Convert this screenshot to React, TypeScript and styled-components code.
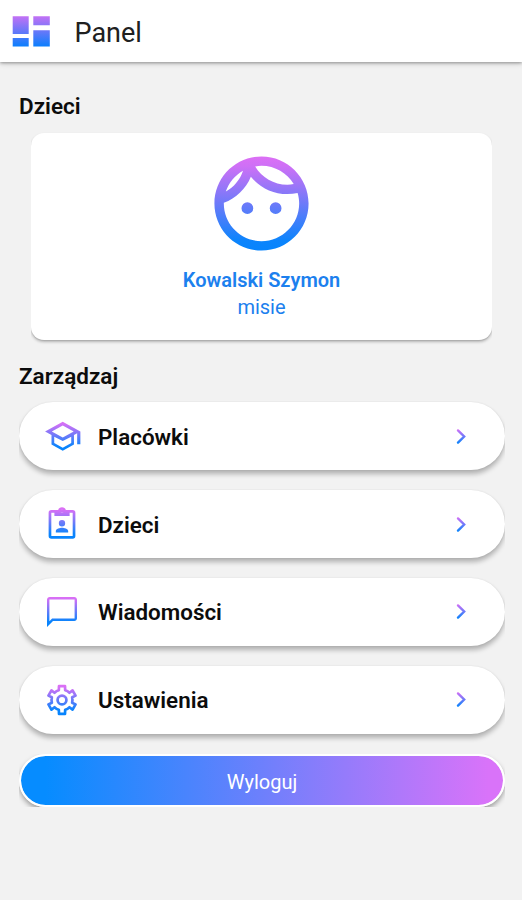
import React from "react";
import styled, { createGlobalStyle } from "styled-components";

const GlobalStyle = createGlobalStyle`
  *, *::before, *::after { box-sizing: border-box; }
  body { margin: 0; background: #f2f2f2; font-family: Roboto, sans-serif; color: #0c0c0c; }
`;

const Screen = styled.div`
  width: 100%;
  max-width: 522px;
  min-height: 900px;
  background: #f2f2f2;
`;

const Header = styled.header`
  display: flex;
  align-items: center;
  height: 62px;
  padding: 1px 12px 0;
  background: #fff;
  box-shadow: 0 1px 3px rgba(0, 0, 0, 0.34), 0 2px 6px rgba(0, 0, 0, 0.12);
`;

const Title = styled.h1`
  margin: 2px 0 0 24.5px;
  font-size: 27px;
  line-height: 32px;
  font-weight: 400;
  color: #202020;
`;

const Content = styled.main`
  padding: 30px 17px 0 19px;
`;

const Heading = styled.h2<{ $top?: number; $bottom: number }>`
  margin: ${(p) => p.$top ?? 0}px 0 ${(p) => p.$bottom}px;
  font-size: 22.5px;
  line-height: 28px;
  font-weight: 600;
`;

const ChildCard = styled.section`
  display: flex;
  flex-direction: column;
  align-items: center;
  height: 207.5px;
  margin: 0 13px 0 12px;
  padding-top: 14px;
  border-radius: 13px;
  background: #fff;
  color: #1c80ee;
  clip-path: inset(-2px 0 -10px 0);
  box-shadow: 0 2px 3px rgba(0, 0, 0, 0.26), 0 1px 1px rgba(0, 0, 0, 0.08);
`;

const ChildName = styled.div`
  margin-top: 7px;
  font-size: 20px;
  line-height: 27px;
  font-weight: 600;
`;

const GroupName = styled.div`
  font-size: 20px;
  line-height: 27px;
`;

const Menu = styled.nav`
  display: flex;
  flex-direction: column;
  gap: 19.8px;
`;

const MenuRow = styled.button`
  display: flex;
  align-items: center;
  width: 100%;
  height: 68px;
  padding: 0 29.5px 0 24px;
  border: 0;
  border-radius: 34px;
  background: #fff;
  color: #0c0c0c;
  font: 600 22.4px/30px Roboto, sans-serif;
  text-align: left;
  clip-path: inset(-2px 0 -14px 0);
  box-shadow: 0 4px 5px rgba(0, 0, 0, 0.27), 0 0 2px rgba(0, 0, 0, 0.08);
`;

const RowLabel = styled.span`
  flex: 1;
  margin: 1px 0 0 17px;
`;

const LogoutFrame = styled.div`
  margin-top: 20px;
  height: 53.5px;
  overflow: hidden;
`;

const LogoutButton = styled.button`
  display: block;
  width: 100%;
  height: 53px;
  padding: 3px 0 0;
  border: 2px solid #fff;
  border-radius: 27px;
  background: linear-gradient(90deg, #068cff 5%, #d973f9 97%) padding-box;
  color: #fff;
  font: 400 20px/26px Roboto, sans-serif;
  box-shadow: 0 3px 5px rgba(0, 0, 0, 0.35);
`;

const Svg = styled.svg`
  display: block;
  flex: none;
`;

const IconSlot = styled.span`
  display: flex;
  justify-content: center;
  width: 38px;
`;

type IconProps = {
  id: string;
  size: number;
  from: number;
  to: number;
  children: React.ReactNode;
};

const GradientIcon = ({ id, size, from, to, children }: IconProps) => (
  <Svg width={size} height={size} viewBox="0 0 24 24" aria-hidden="true">
    <defs>
      <linearGradient id={id} gradientUnits="userSpaceOnUse" x1="0" x2="0" y1={from} y2={to}>
        <stop offset="0" stopColor="#dc6ff5" />
        <stop offset="0.1" stopColor="#cf70f6" />
        <stop offset="0.9" stopColor="#0b84fc" />
        <stop offset="1" stopColor="#0784fd" />
      </linearGradient>
    </defs>
    {children}
  </Svg>
);

const FaceIcon = () => (
  <GradientIcon id="face" size={113} from={2} to={22}>
    <path
      fill="url(#face)"
      fillRule="evenodd"
      d="M10.25 13a1.25 1.25 0 1 1-2.5 0 1.25 1.25 0 0 1 2.5 0zM15 11.75a1.25 1.25 0 1 0 0 2.5 1.25 1.25 0 0 0 0-2.5zM22 12c0 5.52-4.48 10-10 10S2 17.52 2 12 6.48 2 12 2s10 4.48 10 10zM10.66 4.12C12.06 6.44 14.6 8 17.5 8c.46 0 .91-.05 1.34-.12C17.44 5.56 14.9 4 12 4c-.46 0-.91.05-1.34.12zM4.42 9.47c1.71-.97 3.03-2.55 3.66-4.44C6.37 6 5.05 7.58 4.42 9.47zM20 12c0-.78-.12-1.53-.33-2.24-.7.15-1.42.24-2.17.24-3.13 0-5.92-1.44-7.76-3.69C8.69 8.87 6.6 10.88 4 11.86V12c0 4.41 3.59 8 8 8s8-3.59 8-8z"
    />
  </GradientIcon>
);

const SchoolIcon = () => (
  <GradientIcon id="school" size={38.5} from={3} to={20}>
    <path
      fill="url(#school)"
      d="M12.3 3L1.3 9l4 2.18v6l7 3.82 7-3.82v-6l2-1.09V17h2V9l-11-6zm6.82 6l-6.82 3.72L5.48 9l6.82-3.72L19.12 9zM17.6 16.19l-5.3 2.93L7 16.19v-3.92L12.3 15l5.3-2.73v3.92z"
    />
  </GradientIcon>
);

const BadgeIcon = () => (
  <GradientIcon id="badge" size={38} from={2} to={20}>
    <rect x="4.4" y="4" width="15.2" height="16.5" rx="0.9" fill="none" stroke="url(#badge)" strokeWidth="1.7" />
    <path
      fill="url(#badge)"
      fillRule="evenodd"
      d="M7.2 3.3h2.3a2.6 2.6 0 0 1 5 0h2.3v3.6H7.2zM12 3a1 1 0 1 0 0 2 1 1 0 0 0 0-2zM12 9.5a2 2 0 1 0 0 4 2 2 0 0 0 0-4zM8.1 17.3v-.9c0-1.4 2.6-2 3.9-2s3.9.6 3.9 2v.9z"
    />
  </GradientIcon>
);

const ChatIcon = () => (
  <GradientIcon id="chat" size={36} from={2} to={20}>
    <path
      fill="url(#chat)"
      fillRule="evenodd"
      d="M20.2 2H3.8C2.8 2 2 2.8 2 3.8V22l4-4h14.2c1 0 1.8-.8 1.8-1.8V3.8c0-1-.8-1.8-1.8-1.8zm.2 14.4H5.4l-1.8 1.8V3.6h16.8z"
    />
  </GradientIcon>
);

const SettingsIcon = () => (
  <GradientIcon id="settings" size={38} from={3} to={20}>
    <g fill="none" stroke="url(#settings)" strokeWidth="1.7" strokeLinejoin="round">
      <path d="M10.1 3.2h3.8l.1 2.6q1.5.4 2.74 1.61L18.67 5.95l1.9 3.3L18.4 10.3q.45 1.7 0 3.4l2.17 1.05-1.9 3.3-1.93-1.46Q15.5 17.8 14 18.2l-.1 2.6h-3.8L10 18.2q-1.5-.4-2.74-1.61L5.33 18.05l-1.9-3.3L5.6 13.7q-.45-1.7 0-3.4L3.43 9.25l1.9-3.3 1.93 1.46Q8.5 6.2 10 5.8z" />
      <circle cx="12" cy="12" r="2.8" />
    </g>
  </GradientIcon>
);

const ChevronIcon = ({ id }: { id: string }) => (
  <GradientIcon id={id} size={29} from={5} to={19}>
    <path d="M9.1 7l5.1 5-5.1 5" fill="none" stroke={`url(#${id})`} strokeWidth="2" strokeLinecap="round" />
  </GradientIcon>
);

const DashboardIcon = () => (
  <Svg width="38" height="31" viewBox="0 0 38 31" aria-hidden="true">
    <defs>
      <linearGradient id="dashboard" gradientUnits="userSpaceOnUse" x1="0" x2="0" y1="0" y2="31">
        <stop offset="0" stopColor="#c471f5" />
        <stop offset="1" stopColor="#087ffd" />
      </linearGradient>
    </defs>
    <path
      fill="url(#dashboard)"
      d="M.7.3h16v17.6H.7zM21.3.3h16.5v9H21.3zM.7 22.1h16v8.3H.7zM21.3 14.2h16.5v16.2H21.3z"
    />
  </Svg>
);

const items = [
  { id: "school", label: "Placówki", Icon: SchoolIcon },
  { id: "badge", label: "Dzieci", Icon: BadgeIcon },
  { id: "chat", label: "Wiadomości", Icon: ChatIcon },
  { id: "settings", label: "Ustawienia", Icon: SettingsIcon },
];

export default function App() {
  return (
    <>
      <GlobalStyle />
      <Screen>
        <Header>
          <DashboardIcon />
          <Title>Panel</Title>
        </Header>
        <Content>
          <Heading $bottom={12.5}>Dzieci</Heading>
          <ChildCard>
            <FaceIcon />
            <ChildName>Kowalski Szymon</ChildName>
            <GroupName>misie</GroupName>
          </ChildCard>
          <Heading $top={22} $bottom={12.4}>
            Zarządzaj
          </Heading>
          <Menu>
            {items.map(({ id, label, Icon }) => (
              <MenuRow key={id}>
                <IconSlot>
                  <Icon />
                </IconSlot>
                <RowLabel>{label}</RowLabel>
                <ChevronIcon id={`${id}-next`} />
              </MenuRow>
            ))}
          </Menu>
          <LogoutFrame>
            <LogoutButton>Wyloguj</LogoutButton>
          </LogoutFrame>
        </Content>
      </Screen>
    </>
  );
}
